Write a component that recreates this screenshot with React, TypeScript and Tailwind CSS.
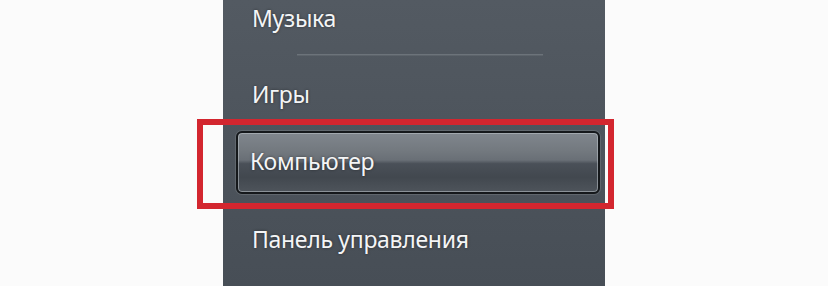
import React from 'react'

const items = {
  music: 'Музыка',
  games: 'Игры',
  computer: 'Компьютер',
  control: 'Панель управления',
}

function MenuText({ children }: { children: React.ReactNode }) {
  return (
    <span className="text-[23px] leading-none tracking-[-0.3px] text-[#f4f5f6] [text-shadow:0_0_3px_rgba(0,0,0,0.45)]">
      {children}
    </span>
  )
}

export default function App() {
  return (
    <div className="w-[828px] h-[286px] bg-[#fbfbfb] overflow-hidden flex font-['Noto_Sans',sans-serif]">
      <div className="ml-[223px] w-[382px] h-full flex flex-col bg-[linear-gradient(to_bottom,#535a62,#474e56)]">
        <div className="h-[36px] pl-[29px] flex items-center">
          <MenuText>{items.music}</MenuText>
        </div>

        <div className="h-[38px] flex items-center">
          <div className="ml-[74px] w-[246px] h-[2px] bg-[#6c737a] border-b border-[#5d646b]" />
        </div>

        <div className="h-[40px] pl-[29px] flex items-center">
          <MenuText>{items.games}</MenuText>
        </div>

        <div className="relative mt-[17px] ml-[13px] w-[364px] h-[63px]">
          <div className="h-full pl-[12px] pb-[3px] flex items-center rounded-[6px] border-2 border-[#15181b] shadow-[inset_0_0_0_1px_rgba(190,196,202,0.55),0_0_0_1px_rgba(110,116,122,0.6)] bg-[linear-gradient(to_bottom,#80868d_0%,#73797f_30%,#696f76_46%,#4a5058_52%,#42484f_75%,#4e545b_100%)]">
            <MenuText>{items.computer}</MenuText>
          </div>
          <div className="absolute left-[-39px] top-[-12px] right-[-14px] bottom-[-15px] border-[6px] border-[#d3262f] pointer-events-none" />
        </div>

        <div className="mt-[16px] h-[59px] pl-[29px] flex items-center">
          <MenuText>{items.control}</MenuText>
        </div>
      </div>
    </div>
  )
}
